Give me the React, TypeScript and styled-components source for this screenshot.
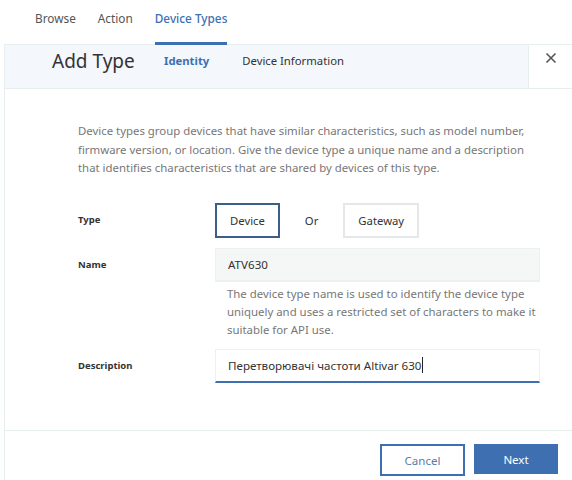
import React from "react";
import styled, { createGlobalStyle } from "styled-components";

const GlobalStyle = createGlobalStyle`
  html, body {
    margin: 0;
    padding: 0;
    background: #ffffff;
    font-family: "Noto Sans", "Open Sans", Arial, sans-serif;
    color: #333;
  }
  * { box-sizing: border-box; }
`;

const Page = styled.div`
  width: 572px;
  height: 480px;
  overflow: hidden;
  background: #fff;
`;

const TopNav = styled.nav`
  display: flex;
  height: 44px;
  padding-left: 35px;
  gap: 22px;
`;

const NavTab = styled.div<{ $active?: boolean }>`
  display: flex;
  align-items: center;
  padding-bottom: 6px;
  font-size: 11.8px;
  color: ${(p) => (p.$active ? "#3d70b2" : "#555")};
  font-weight: ${(p) => (p.$active ? 500 : 400)};
  border-bottom: 3px solid ${(p) => (p.$active ? "#3d70b2" : "transparent")};
  margin-bottom: -1px;
  position: relative;
  z-index: 1;
`;

const Modal = styled.div`
  margin-left: 4px;
  border-left: 1px solid #e6eeee;
  border-top: 1px solid #e6eeee;
  height: 436px;
  display: flex;
  flex-direction: column;
`;

const Header = styled.div`
  display: flex;
  height: 44px;
  border-bottom: 1px solid #e6eeee;
`;

const HeaderMain = styled.div`
  flex: 1;
  display: flex;
  align-items: flex-start;
  padding: 4px 0 0 47px;
  background: #f4f7fb;
`;

const Title = styled.h2`
  margin: 0;
  font-size: 19px;
  font-weight: 400;
  color: #333;
  line-height: 24px;
  width: 112px;
`;

const StepTab = styled.div<{ $active?: boolean }>`
  font-size: 11.3px;
  line-height: 24px;
  margin-right: 33px;
  color: ${(p) => (p.$active ? "#3d70b2" : "#333")};
  font-weight: ${(p) => (p.$active ? 700 : 400)};
`;

const CloseBox = styled.div`
  width: 44px;
  border-left: 1px solid #e6eeee;
  background: #fff;
  display: flex;
  justify-content: center;
  padding-top: 7px;
  color: #555;
`;

const Body = styled.div`
  flex: 1;
  padding: 33px 0 0 73px;
`;

const Intro = styled.p`
  margin: 0 0 25px;
  width: 460px;
  font-size: 11.4px;
  line-height: 18.5px;
  color: #777;
`;

const FormGrid = styled.div`
  display: grid;
  grid-template-columns: 137px 325px;
  row-gap: 10px;
  align-items: start;
`;

const Label = styled.div`
  font-size: 9.5px;
  font-weight: 700;
  color: #333;
  height: 34px;
  display: flex;
  align-items: center;
`;

const TypeChoice = styled.div`
  display: flex;
  align-items: center;
  height: 35px;
`;

const ChoiceButton = styled.div<{ $selected?: boolean }>`
  height: 35px;
  padding: 0 13px;
  display: flex;
  align-items: center;
  font-size: 11.3px;
  color: #333;
  border: 2px solid ${(p) => (p.$selected ? "#3b5f8a" : "#e4e8e8")};
  background: #fff;
`;

const OrText = styled.span`
  font-size: 11.3px;
  color: #333;
  margin: 0 25px;
`;

const Field = styled.div<{ $focused?: boolean }>`
  height: 34px;
  display: flex;
  align-items: center;
  padding-left: 12px;
  font-size: 11.6px;
  color: #333;
  background: ${(p) => (p.$focused ? "#fff" : "#f5f7f7")};
  border: 1px solid ${(p) => (p.$focused ? "#eef1f1" : "#edf0f0")};
  border-bottom: 2px solid ${(p) => (p.$focused ? "#3d70b2" : "#edf0f0")};
`;

const Cursor = styled.span`
  display: inline-block;
  width: 1px;
  height: 16px;
  background: #222;
  margin-left: 1px;
`;

const FieldGroup = styled.div`
  display: flex;
  flex-direction: column;
`;

const Help = styled.div`
  padding: 3px 0 0 12px;
  font-size: 11.4px;
  line-height: 18px;
  color: #777;
  width: 325px;
`;

const Footer = styled.div`
  height: 50px;
  border-top: 1px solid #e6eeee;
  display: flex;
  justify-content: flex-end;
  gap: 9px;
  padding: 13px 14px 0 0;
`;

const Button = styled.div<{ $primary?: boolean }>`
  width: ${(p) => (p.$primary ? "84px" : "85px")};
  height: ${(p) => (p.$primary ? "30px" : "32px")};
  display: flex;
  align-items: center;
  justify-content: center;
  font-size: 11.5px;
  color: ${(p) => (p.$primary ? "#fff" : "#5b7ba6")};
  background: ${(p) => (p.$primary ? "#3d6fb1" : "#fff")};
  border: 2px solid #3d70b2;
`;

const CloseIcon = () => (
  <svg width="12" height="12" viewBox="0 0 12 12">
    <path d="M1.5 1.5 L10.5 10.5 M10.5 1.5 L1.5 10.5" stroke="#555" strokeWidth="1.6" />
  </svg>
);

export default function App() {
  return (
    <Page>
      <GlobalStyle />
      <TopNav>
        <NavTab>Browse</NavTab>
        <NavTab>Action</NavTab>
        <NavTab $active>Device Types</NavTab>
      </TopNav>
      <Modal>
        <Header>
          <HeaderMain>
            <Title>Add Type</Title>
            <StepTab $active>Identity</StepTab>
            <StepTab>Device Information</StepTab>
          </HeaderMain>
          <CloseBox>
            <CloseIcon />
          </CloseBox>
        </Header>
        <Body>
          <Intro>
            Device types group devices that have similar characteristics, such as model number,
            firmware version, or location. Give the device type a unique name and a description
            that identifies characteristics that are shared by devices of this type.
          </Intro>
          <FormGrid>
            <Label>Type</Label>
            <TypeChoice>
              <ChoiceButton $selected>Device</ChoiceButton>
              <OrText>Or</OrText>
              <ChoiceButton>Gateway</ChoiceButton>
            </TypeChoice>
            <Label>Name</Label>
            <FieldGroup>
              <Field>ATV630</Field>
              <Help>
                The device type name is used to identify the device type uniquely and uses a
                restricted set of characters to make it suitable for API use.
              </Help>
            </FieldGroup>
            <Label>Description</Label>
            <Field $focused>
              Перетворювачі частоти Altivar 630
              <Cursor />
            </Field>
          </FormGrid>
        </Body>
        <Footer>
          <Button>Cancel</Button>
          <Button $primary>Next</Button>
        </Footer>
      </Modal>
    </Page>
  );
}
